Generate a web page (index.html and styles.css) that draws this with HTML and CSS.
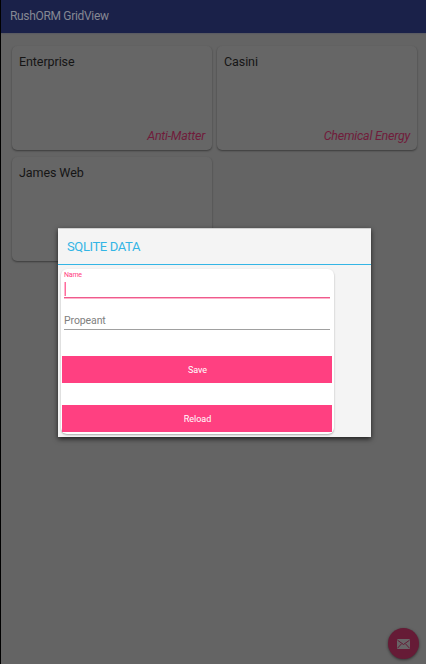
FILE: index.html
```html
<!DOCTYPE html>
<html lang="en">
<head>
<meta charset="utf-8">
<title>RushORM GridView</title>
<link rel="stylesheet" href="styles.css">
</head>
<body>
<div class="screen">
  <header class="appbar"><span>RushORM GridView</span></header>
  <main class="grid">
    <article class="card"><span class="name">Enterprise</span><span class="fuel">Anti-Matter</span></article>
    <article class="card"><span class="name">Casini</span><span class="fuel">Chemical Energy</span></article>
    <article class="card"><span class="name">James Web</span></article>
  </main>
  <div class="fab">
    <svg width="13" height="10" viewBox="0 0 13 10"><rect width="13" height="10" rx="1" fill="#686567"/><path d="M.5 1.2 6.5 5.5 12.5 1.2M.7 9 4.5 4.8M12.3 9 8.5 4.8" fill="none" stroke="#641b35" stroke-width="1"/></svg>
  </div>
  <section class="dialog">
    <h1 class="title"><span>SQLITE DATA</span></h1>
    <form class="form">
      <div class="field active"><span class="label">Name</span><span class="caret"></span></div>
      <div class="field idle"><span class="hint">Propeant</span></div>
      <button type="button" class="save"><span>Save</span></button>
      <button type="button" class="reload"><span>Reload</span></button>
    </form>
  </section>
</div>
</body>
</html>
```
FILE: styles.css
```css
* { box-sizing: border-box; }
body { margin: 0; font-family: Roboto, sans-serif; }
.screen {
  position: relative;
  width: 426px;
  height: 664px;
  overflow: hidden;
  background: #646464;
  border-left: 1px solid #000;
}
.appbar {
  height: 33px;
  padding-left: 9px;
  background: #1a2149;
  color: #858893;
  font-size: 12px;
  line-height: 33px;
  letter-spacing: -0.32px;
  box-shadow: 0 1px 1px #5a5b62;
}
.grid {
  display: grid;
  grid-template-columns: 200px 200px;
  grid-auto-rows: 104px;
  gap: 7px 5px;
  padding: 13px 0 0 11px;
}
.card {
  display: flex;
  flex-direction: column;
  justify-content: space-between;
  padding: 7px 7px 6px;
  border-radius: 5px;
  background: #666;
  box-shadow: 0 1px 2px rgba(0, 0, 0, .42);
}
.name { color: #151515; font-size: 12.5px; line-height: 17px; letter-spacing: -0.08px; }
.fuel { align-self: flex-end; color: #701c3b; font-size: 12.5px; font-style: italic; line-height: 17px; letter-spacing: -0.25px; }
.fab {
  position: absolute;
  left: 387px;
  top: 628px;
  display: flex;
  align-items: center;
  justify-content: center;
  width: 31px;
  height: 31px;
  border-radius: 50%;
  background: #661b36;
  box-shadow: 0 1px 3px rgba(0, 0, 0, .5);
}
.dialog {
  position: absolute;
  left: 57px;
  top: 228px;
  width: 313px;
  height: 209px;
  background: #f4f4f4;
  border-top: 1px solid #d0d0d0;
  box-shadow: 0 2px 5px rgba(0, 0, 0, .7);
}
.title {
  height: 36px;
  margin: 0;
  padding-left: 9px;
  border-bottom: 1px solid #33b5e5;
  color: #33b5e5;
  font-size: 13px;
  font-weight: 400;
  line-height: 36px;
  letter-spacing: -0.38px;
}
.form {
  display: flex;
  flex-direction: column;
  width: 273px;
  height: 165px;
  margin: 4px 0 0 3px;
  padding: 0 2px 0 1px;
  border-radius: 6px;
  background: #fff;
  box-shadow: 0 1px 2px rgba(0, 0, 0, .3);
}
.field { display: flex; flex-direction: column; margin: 0 2px; }
.active { height: 29px; border-bottom: 1px solid #ee5b8c; box-shadow: 0 1px #ffb3cd; }
.label { padding-top: 1px; color: #ff4081; font-size: 7px; line-height: 10px; letter-spacing: -0.2px; }
.caret { width: 1px; height: 14px; margin: 2px 0 0 1px; background: #ff6c9c; box-shadow: -1px 0 #ffb3cd; }
.idle { height: 32px; border-bottom: 1px solid #a0a0a0; }
.hint { padding-top: 15px; color: #808080; font-size: 10.5px; line-height: 15px; letter-spacing: -0.1px; }
button {
  height: 27px;
  padding: 1px 0 0 1px;
  border: 0;
  background: #ff4081;
  color: #fff;
  font: 9px/26px Roboto, sans-serif;
}
.save { margin-top: 26px; }
.reload { margin-top: 22px; }
```
